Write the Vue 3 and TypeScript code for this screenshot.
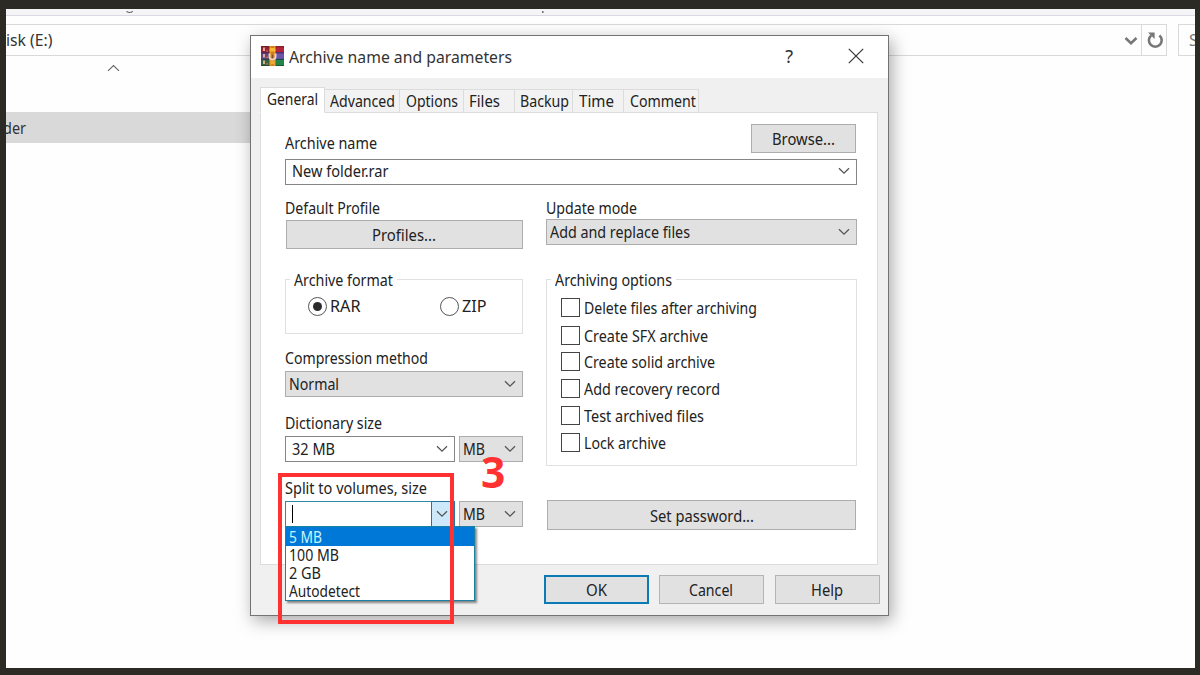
<script setup lang="ts">
import { ref } from 'vue'
import type { Directive } from 'vue'

interface Label { text: string; width: number }
interface Tab extends Label { box: number; pad: number }
interface Option extends Label { gap: number }

// Condenses a label horizontally so that it takes up the given width.
const vFit: Directive<HTMLElement, number> = {
  mounted(el, { value }) {
    const natural = el.getBoundingClientRect().width
    el.style.transform = `scaleX(${value / natural})`
    el.style.marginRight = `${value - natural}px`
  },
}

const tabs: Tab[] = [
  { text: 'General', width: 51, box: 65, pad: 6 },
  { text: 'Advanced', width: 65, box: 75, pad: 5 },
  { text: 'Options', width: 52, box: 64, pad: 6 },
  { text: 'Files', width: 31, box: 51, pad: 5 },
  { text: 'Backup', width: 49, box: 58, pad: 5 },
  { text: 'Time', width: 35, box: 51, pad: 6 },
  { text: 'Comment', width: 66, box: 75, pad: 6 },
]

const options: Option[] = [
  { text: 'Delete files after archiving', width: 173, gap: 0 },
  { text: 'Create SFX archive', width: 124, gap: 9 },
  { text: 'Create solid archive', width: 131, gap: 7 },
  { text: 'Add recovery record', width: 136, gap: 8 },
  { text: 'Test archived files', width: 120, gap: 8 },
  { text: 'Lock archive', width: 82, gap: 8 },
]

const sizes: Label[] = [
  { text: '5 MB', width: 33 },
  { text: '100 MB', width: 50 },
  { text: '2 GB', width: 32 },
  { text: 'Autodetect', width: 71 },
]

const buttons: (Label & { kind: string })[] = [
  { text: 'OK', width: 21, kind: 'primary' },
  { text: 'Cancel', width: 44, kind: '' },
  { text: 'Help', width: 32, kind: '' },
]

const format = ref('RAR')
const activeTab = ref('General')
const highlighted = ref('5 MB')
</script>

<template>
  <div class="frame">
    <div class="explorer">
      <div class="ribbon">
        <svg width="560" height="4" viewBox="0 0 560 4"><path d="M120.5 .3 Q123.5 2.6 126.8 .3" fill="none" stroke="#666" stroke-width="1.1" /><path d="M536.8 0 V2" stroke="#666" stroke-width="1.4" /></svg>
      </div>
      <div class="navbar">
        <div class="address">
          <span v-fit="46.5" class="t path">isk (E:)</span>
          <svg class="hist" width="14" height="10" viewBox="0 0 14 10"><path d="M1.5 2 L7 7.2 L12.5 2" fill="none" stroke="#777" stroke-width="2.6" /></svg>
          <div class="refresh">
            <svg width="18" height="18" viewBox="0 0 18 18">
              <path d="M13.4 4.4 A6.4 6.4 0 1 1 5.2 4.4" fill="none" stroke="#777" stroke-width="2.6" />
              <path d="M2 1.4 H8.6 V8 Z" fill="#777" />
            </svg>
          </div>
        </div>
        <div class="search"><span class="t">S</span></div>
      </div>
      <div class="sort">
        <svg width="13" height="8" viewBox="0 0 13 8"><path d="M1 6.8 L6.5 1.5 L12 6.8" fill="none" stroke="#666" stroke-width="1.1" /></svg>
      </div>
      <div class="row"><span v-fit="23" class="t">der</span></div>
    </div>

    <section class="dialog">
      <header class="title">
        <svg class="logo" width="23" height="20" viewBox="0 0 23 20">
          <rect width="23" height="7" y="0" fill="#b72338" />
          <rect width="23" height="1.4" y="0" fill="#86202c" />
          <rect width="23" height="7" y="6.6" fill="#6c55ad" />
          <rect width="23" height="1.2" y="6.2" fill="#3f2b69" />
          <rect width="23" height="7" y="13" fill="#218449" />
          <rect width="23" height="1.2" y="12.8" fill="#174d4c" />
          <rect width="23" height="1" y="19" fill="#155b33" />
          <rect x="0" width="8" height="20" fill="#59262b" opacity=".35" />
          <path d="M3 1.6 V5 M3 8 V11.4 M3 14.5 V18" fill="none" stroke="#edb5a0" stroke-width="1.8" />
          <path d="M5.2 5 H7 M5.2 11.4 H7 M5.2 17.8 H7" fill="none" stroke="#c97a62" stroke-width="1.2" />
          <rect x="8.5" width="6" height="20" fill="#e59a24" />
          <rect x="10.2" width="2.6" height="20" fill="#cf7a20" />
          <rect x="8.7" y="2" width="5.6" height="3.4" rx="1.2" fill="#f5ba31" />
          <path d="M8.4 7.5 V11 Q8.6 13.6 11.5 13.6 Q14.4 13.6 14.6 11 V7.5" fill="none" stroke="#ecd5c8" stroke-width="1.7" />
          <path d="M11.5 9 V12" stroke="#7a4a3a" stroke-width="1.2" />
          <rect x="9.6" y="14.8" width="4" height="3.4" fill="#eeaa37" />
        </svg>
        <span v-fit="223" class="t heading">Archive name and parameters</span>
        <span class="t help">?</span>
        <svg class="close" width="16" height="16" viewBox="0 0 16 16"><path d="M.8 .8 L15.2 15.2 M15.2 .8 L.8 15.2" fill="none" stroke="#333" stroke-width="1.2" /></svg>
      </header>

      <nav class="tabs">
        <div
          v-for="tab in tabs"
          :key="tab.text"
          class="tab"
          :class="{ active: tab.text === activeTab }"
          :style="{ width: tab.box + 'px', paddingLeft: tab.pad + 'px' }"
          @click="activeTab = tab.text"
        ><span v-fit="tab.width" class="t">{{ tab.text }}</span></div>
      </nav>

      <div class="pane">
        <div class="name-row">
          <span v-fit="92" class="t name-label">Archive name</span>
          <div class="btn browse"><span v-fit="63" class="t">Browse...</span></div>
        </div>
        <div class="combo edit name">
          <span v-fit="96.5" class="t">New folder.rar</span>
          <svg class="chev" viewBox="0 0 12 8"><path d="M1 1.2 L6 6.2 L11 1.2" /></svg>
        </div>

        <div class="columns">
          <div class="left">
            <div class="label"><span v-fit="95" class="t">Default Profile</span></div>
            <div class="btn profiles"><span v-fit="64" class="t">Profiles...</span></div>

            <div class="group format">
              <div class="legend"><span v-fit="99" class="t">Archive format</span></div>
              <div class="radios">
                <div class="radio" @click="format = 'RAR'"><i :class="{ on: format === 'RAR' }"></i><span v-fit="30.5" class="t">RAR</span></div>
                <div class="radio" @click="format = 'ZIP'"><i :class="{ on: format === 'ZIP' }"></i><span v-fit="24.5" class="t">ZIP</span></div>
              </div>
            </div>

            <div class="label method"><span v-fit="143" class="t">Compression method</span></div>
            <div class="combo">
              <span v-fit="50" class="t">Normal</span>
              <svg class="chev" viewBox="0 0 12 8"><path d="M1 1.2 L6 6.2 L11 1.2" /></svg>
            </div>

            <div class="label spaced"><span v-fit="97" class="t">Dictionary size</span></div>
            <div class="pair">
              <div class="combo edit size">
                <span v-fit="43" class="t">32 MB</span>
                <svg class="chev" viewBox="0 0 12 8"><path d="M1 1.2 L6 6.2 L11 1.2" /></svg>
              </div>
              <div class="combo unit">
                <span v-fit="22" class="t">MB</span>
                <svg class="chev" viewBox="0 0 12 8"><path d="M1 1.2 L6 6.2 L11 1.2" /></svg>
              </div>
            </div>

            <div class="label spaced"><span v-fit="142" class="t">Split to volumes, size</span></div>
            <div class="pair">
              <div class="combo edit size open">
                <i class="cursor"></i>
                <div class="drop"><svg class="chev" viewBox="0 0 12 8"><path d="M1 1.2 L6 6.2 L11 1.2" /></svg></div>
                <ul class="menu">
                  <li v-for="s in sizes" :key="s.text" :class="{ hot: s.text === highlighted }" @mouseenter="highlighted = s.text">
                    <span v-fit="s.width" class="t">{{ s.text }}</span>
                  </li>
                </ul>
              </div>
              <div class="combo unit">
                <span v-fit="22" class="t">MB</span>
                <svg class="chev" viewBox="0 0 12 8"><path d="M1 1.2 L6 6.2 L11 1.2" /></svg>
              </div>
            </div>
          </div>

          <div class="right">
            <div class="label"><span v-fit="91" class="t">Update mode</span></div>
            <div class="combo">
              <span v-fit="140" class="t">Add and replace files</span>
              <svg class="chev" viewBox="0 0 12 8"><path d="M1 1.2 L6 6.2 L11 1.2" /></svg>
            </div>
            <div class="group archiving">
              <div class="legend"><span v-fit="117" class="t">Archiving options</span></div>
              <div class="checks">
                <div v-for="o in options" :key="o.text" class="check" :style="{ marginTop: o.gap + 'px' }">
                  <i></i><span v-fit="o.width" class="t">{{ o.text }}</span>
                </div>
              </div>
            </div>
            <div class="btn password"><span v-fit="104" class="t">Set password...</span></div>
          </div>
        </div>
      </div>

      <footer class="actions">
        <div v-for="b in buttons" :key="b.text" class="btn" :class="b.kind"><span v-fit="b.width" class="t">{{ b.text }}</span></div>
      </footer>
    </section>

    <div class="marker"></div>
    <div class="step">3</div>
  </div>
</template>

<style>
body { margin: 0; overflow: hidden; }
</style>

<style scoped>
* { box-sizing: border-box; }
.frame {
  position: relative;
  width: 1200px;
  height: 675px;
  padding: 9px 5px 7px 6px;
  background: #2c2a24;
  overflow: hidden;
  font: 16px/18px "Noto Sans", "Open Sans", sans-serif;
  color: #222;
}
.t { display: inline-block; white-space: nowrap; transform-origin: 0 50%; flex: none; }

.explorer { height: 659px; background: #fefefe; overflow: hidden; }
.ribbon { height: 7px; line-height: 0; background: #f5f5f7; border-bottom: 1px solid #d9dae3; }
.navbar { display: flex; height: 32px; margin-top: 8px; }
.address { display: flex; flex: none; align-items: center; width: 1161px; border: 1px solid #d9d9d9; border-left: 0; color: #333; }
.hist { margin: 2px 3px 0 auto; }
.refresh { display: flex; align-items: center; justify-content: center; width: 25px; height: 30px; padding-left: 1px; border-left: 1px solid #d9d9d9; }
.search { flex: none; width: 40px; margin-left: 11px; padding: 6px 0 0 10px; border: 1px solid #d9d9d9; color: #777; }
.sort { height: 56px; padding: 8px 0 0 101px; line-height: 0; }
.row { display: flex; align-items: center; height: 31px; width: 300px; background: #d9d9d9; color: #333; }
.row .t { margin-left: -3px; }

.dialog {
  position: absolute;
  left: 250px;
  top: 35px;
  width: 639px;
  height: 581px;
  border: 1px solid #737373;
  background: #f0f0f0;
  box-shadow: 3px 5px 16px rgba(0, 0, 0, .34);
}
.title { display: flex; height: 42px; padding: 10px 24px 0 10px; background: #fff; }
.heading { margin-left: 5px; margin-top: 2px; font-size: 16.5px; color: #333; }
.help { margin: 1px 55px 0 auto; font-size: 18px; color: #333; }
.close { margin-top: 2px; }

.tabs { display: flex; align-items: flex-end; height: 35px; padding-left: 9px; position: relative; z-index: 1; margin-bottom: -1px; }
.tab { height: 24px; padding-top: 2px; border: 1px solid #dcdcdc; border-left: 0; background: #f2f2f2; }
.tab.active { height: 26px; border-left: 1px solid #dcdcdc; border-bottom-color: #fff; background: #fff; }
.pane { width: 618px; height: 453px; margin-left: 9px; padding: 11px 20px 0 24px; border: 1px solid #dcdcdc; background: #fff; }

.btn { display: flex; align-items: center; justify-content: center; height: 29px; background: #e1e1e1; border: 1px solid #adadad; padding: 0 1px 0 0; }
.name-row { display: flex; justify-content: space-between; width: 571px; }
.name-label { margin-top: 10px; }
.browse { width: 105px; }
.combo { position: relative; display: flex; align-items: center; height: 26px; padding: 0 6px 0 3px; background: #e1e1e1; border: 1px solid #adadad; }
.edit { background: #fff; border-color: #858585; padding-left: 6px; }
.name { width: 572px; margin-top: 6px; padding-bottom: 2px; }
.chev { width: 12px; height: 8px; margin-left: auto; flex: none; }
.chev path { fill: none; stroke: #555; stroke-width: 1.3; }

.columns { display: flex; gap: 23px; margin-top: 14px; }
.left { width: 238px; }
.right { width: 311px; }
.label { height: 20px; }
.profiles { width: 237px; margin: 1px 0 0 1px; }
.group { border: 1px solid #e0e0e0; }
.legend { display: flex; width: max-content; margin: -9px 0 0 4px; padding: 0 4px; background: #fff; height: 18px; }
.format { height: 55px; margin-top: 30px; }
.radios { display: flex; padding: 8px 0 0 22px; }
.radio { display: flex; align-items: center; gap: 3px; width: 132px; height: 19px; }
.radio .t { margin-top: -1px; }
.radio:last-child { width: 60px; }
.radio i { display: flex; align-items: center; justify-content: center; width: 19px; height: 19px; border: 1px solid #555; border-radius: 50%; }
.radio i.on::after { content: ""; width: 9px; height: 9px; border-radius: 50%; background: #2b2b2b; }
.method { margin-top: 15px; height: 22px; }
.spaced { margin-top: 17px; height: 22px; }
.pair { display: flex; justify-content: space-between; }
.size { width: 170px; }
.unit { width: 64px; }

.open { border-color: #2b8aa8; padding: 0; }
.cursor { width: 1px; height: 18px; margin-left: 6px; background: #000; }
.drop { display: flex; align-items: center; width: 24px; height: 26px; margin: -1px -1px -1px auto; padding-right: 6px; background: #cce8fa; border: 1px solid #2577a0; }
.menu {
  position: absolute;
  left: -1px;
  top: 24px;
  z-index: 2;
  width: 190px;
  height: 75px;
  margin: 0;
  padding: 0;
  list-style: none;
  background: #fff;
  border: 1px solid #1d80a3;
  box-shadow: 2px 2px 2px rgba(0, 0, 0, .45);
}
.menu li { height: 18px; padding-left: 3px; line-height: 18px; }
.menu .t { font-size: 15.5px; line-height: 18px; vertical-align: top; }
.menu li.hot { height: 19px; padding-top: 1px; background: #0078d7; color: #c4f3ff; }

.archiving { height: 187px; margin-top: 34px; }
.checks { padding: 9px 0 0 14px; }
.check { display: flex; align-items: center; gap: 4px; height: 19px; }
.check .t { margin-top: 1px; }
.check i { width: 19px; height: 19px; border: 1px solid #444; background: #fff; }
.password { width: 309px; height: 30px; margin: 34px 0 0 1px; padding: 2px 0 0; }

.actions { display: flex; gap: 10.4px; padding: 10px 0 0 293px; }
.actions .btn { width: 105px; border-color: #b4b4b4; }
.actions .primary { border: 2px solid #0b7bb5; }

.marker { position: absolute; left: 278px; top: 473px; width: 176px; height: 151px; border: 4px solid #ff3131; z-index: 3; }
.step { position: absolute; left: 481px; top: 448px; z-index: 3; font: 700 42.5px/48px "Open Sans", "Noto Sans", sans-serif; color: #ff3131; }
</style>
